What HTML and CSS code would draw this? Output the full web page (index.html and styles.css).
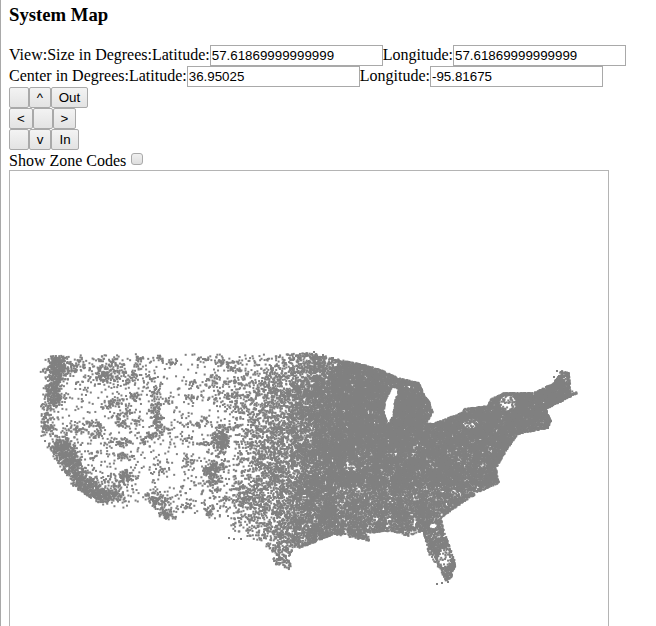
FILE: index.html
```html
<!DOCTYPE html>
<html lang="en">
<head>
  <meta charset="UTF-8">
  <title>System Map</title>
  <link rel="stylesheet" href="styles.css">
</head>
<body>
  <h3 class="page-title">System Map</h3>

  <div class="field-row">View:Size in Degrees:Latitude:<input class="deg-input" type="text" value="57.61869999999999">Longitude:<input class="deg-input" type="text" value="57.61869999999999"></div>
  <div class="field-row">Center in Degrees:Latitude:<input class="deg-input" type="text" value="36.95025">Longitude:<input class="deg-input" type="text" value="-95.81675"></div>

  <div class="nav-row"><button class="nav-btn blank" type="button"></button><button class="nav-btn nav-up" type="button">^</button><button class="nav-btn nav-out" type="button">Out</button></div>
  <div class="nav-row"><button class="nav-btn nav-left" type="button">&lt;</button><button class="nav-btn blank" type="button"></button><button class="nav-btn nav-right" type="button">&gt;</button></div>
  <div class="nav-row"><button class="nav-btn blank" type="button"></button><button class="nav-btn nav-up" type="button">v</button><button class="nav-btn nav-in" type="button">In</button></div>

  <div class="zone-row">Show Zone Codes <input class="zone-check" type="checkbox"></div>

  <div class="map-box">
    <canvas id="map" width="598" height="598"></canvas>
  </div>

  <script src="map.js"></script>
</body>
</html>
```

FILE: styles.css
```css
html {
  overflow: hidden;
}

body {
  margin: 0;
  padding: 4px 8px 0;
  border-left: 1px solid #a9a9a9;
  font-family: "Liberation Serif", serif;
  font-size: 16px;
  color: #000;
  background-color: #fff;
}

.page-title {
  margin: 0 0 19px;
  font-size: 18.72px;
  font-weight: bold;
}

.field-row {
  height: 21px;
  white-space: nowrap;
}

.deg-input {
  box-sizing: border-box;
  width: 173px;
  height: 21px;
  margin: 0;
  padding: 1px;
  border: 1px solid #a9a9a9;
  font-family: "Liberation Sans", sans-serif;
  font-size: 13.333px;
  color: #000;
}

.nav-row {
  display: flex;
  height: 21px;
}

.nav-btn {
  box-sizing: border-box;
  height: 21px;
  margin: 0;
  padding: 1px 0;
  border: 1px solid #a9a9a9;
  border-radius: 2px;
  background: linear-gradient(#f3f3f3, #e3e3e3);
  font-family: "Liberation Sans", sans-serif;
  font-size: 13.333px;
  color: #000;
}

.nav-btn.blank {
  width: 20px;
}

.nav-up {
  width: 22px;
}

.nav-out {
  width: 37px;
}

.nav-left {
  width: 24px;
}

.nav-right {
  width: 23px;
}

.nav-in {
  width: 28px;
}

.zone-row {
  height: 20px;
  line-height: 22px;
}

.zone-check {
  appearance: none;
  box-sizing: border-box;
  width: 12px;
  height: 12px;
  margin: 0 0 1px 1px;
  border: 1px solid #a9a9a9;
  border-radius: 3px;
  background: linear-gradient(#f0f0f0, #dedede);
}

.map-box {
  box-sizing: border-box;
  width: 600px;
  height: 600px;
  border: 1px solid #b4b4b4;
}

#map {
  display: block;
}
```

FILE: map.js
```js
// zip code points, generated from a rough outline of the lower 48
var canvas = document.getElementById('map');
var ctx = canvas.getContext('2d');
var OFFSET_X = 10, OFFSET_Y = 171;

var seed = 20240611;
function rnd() {
  seed = (seed + 0x6D2B79F5) | 0;
  var t = Math.imul(seed ^ (seed >>> 15), 1 | seed);
  t = (t + Math.imul(t ^ (t >>> 7), 61 | t)) ^ t;
  return ((t ^ (t >>> 14)) >>> 0) / 4294967296;
}
function gauss() {
  return (rnd() + rnd() + rnd() + rnd() - 2) * 1.7;
}

var outline = [
  [36,361],[50,354],[62,355],[120,353],[200,353],[270,353],[313,352],[335,358],[363,364],
  [380,369],[397,377],[418,382],[424,396],[428,400],[432,412],[425,422],[432,423],[460,412],
  [463,408],[487,405],[490,398],[503,392],[533,392],[553,382],[560,370],[568,372],[570,390],
  [577,392],[557,402],[545,408],[550,420],[547,427],[517,433],[507,447],[495,467],[498,482],
  [480,490],[460,503],[440,517],[443,530],[455,563],[450,577],[444,580],[440,570],[428,553],
  [422,530],[407,535],[390,530],[367,532],[368,540],[333,533],[300,547],[293,547],[287,557],
  [293,570],[273,563],[270,550],[260,540],[233,536],[213,520],[200,510],[177,520],[160,517],
  [147,500],[127,507],[107,508],[90,497],[73,487],[57,463],[40,437],[40,430],[37,413],[43,390],[40,377]
];
var lake = [[391,386],[384,400],[383,412],[387,423],[392,415],[394,400],[398,388]];

// less dense spots in the east
var gaps = [
  [507,402,9,8,0.12],[470,423,8,5,0.25],[350,465,7,6,0.3],[432,525,4,3,0.03],[443,557,6,10,0.15]
];

// [x, y, spread x, spread y, count]
var clusters = [
  [57,365,5,8,320],[53,390,4,9,240],[107,372,8,6,150],[77,363,8,5,60],[112,403,7,3,60],
  [155,416,3,13,120],[220,438,4,6,200],[212,477,5,10,140],[233,400,6,6,60],[157,500,7,5,100],
  [165,513,5,3,70],[125,475,4,3,50],[100,494,12,4,340],[62,448,6,7,240],[70,462,5,7,220],
  [80,478,6,6,220],[247,493,6,5,70],[207,513,4,3,30],[45,420,4,12,100],[90,490,6,5,90]
];

function inside(poly, x, y) {
  var c = false;
  for (var i = 0, j = poly.length - 1; i < poly.length; j = i++) {
    var a = poly[i], b = poly[j];
    if ((a[1] > y) !== (b[1] > y) && x < (b[0] - a[0]) * (y - a[1]) / (b[1] - a[1]) + a[0]) {
      c = !c;
    }
  }
  return c;
}

function inLand(x, y) {
  return inside(outline, x, y) && !inside(lake, x, y);
}

// patchiness, one random factor per 6px cell
var cells = {};
function patch(x, y) {
  var key = Math.floor(x / 6) + ':' + Math.floor(y / 6);
  if (cells[key] === undefined) cells[key] = 0.5 + rnd() * 0.9;
  return cells[key];
}

function density(x, y) {
  var p;
  if (x < 235) p = 0.018;
  else if (x < 285) p = 0.018 + (x - 235) / 50 * 0.18;
  else if (x < 335) p = 0.2 + (x - 285) / 50 * 0.5;
  else if (y < 445) p = 0.9;
  else if (y < 485) p = 0.65;
  else p = 0.45;
  if (x < 345 && y < 375) p *= 0.6;
  gaps.forEach(function (g) {
    var dx = (x - g[0]) / g[2], dy = (y - g[1]) / g[3];
    if (dx * dx + dy * dy < 1) p *= g[4];
  });
  return p * patch(x, y);
}

function dot(x, y) {
  ctx.fillRect(x - OFFSET_X, y - OFFSET_Y, 2, 2);
}

ctx.fillStyle = '#808080';

for (var i = 0; i < 250000; i++) {
  var x = 35 + rnd() * 545;
  var y = 350 + rnd() * 235;
  if (inLand(x, y) && rnd() < density(x, y)) dot(x, y);
}

clusters.forEach(function (c) {
  for (var n = 0; n < c[4]; n++) {
    var x = c[0] + gauss() * c[2];
    var y = c[1] + gauss() * c[3];
    if (inLand(x, y)) dot(x, y);
  }
});

// small towns in the west
for (var t = 0; t < 90; t++) {
  var tx = 45 + rnd() * 195;
  var ty = 356 + rnd() * 150;
  for (var m = 0; m < 14; m++) {
    var px = tx + gauss() * 3.5, py = ty + gauss() * 2;
    if (inLand(px, py)) dot(px, py);
  }
}

// rows of towns fanning out over the plains
for (var r = 0; r < 26; r++) {
  var y0 = 392 + r * 4.6;
  var slope = (y0 - 450) * -0.05;
  for (var k = 0; k < 20; k++) {
    var sx = 232 + rnd() * 50;
    var sy = y0 + slope * (sx - 290) / 10 + gauss() * 0.7;
    if (inLand(sx, sy)) dot(sx, sy);
  }
}

// scattered points just off the edge
[[313,351],[322,354],[332,357],[345,361],[352,362],[361,364],[553,376],[556,370],[548,385],[540,389],
 [447,581],[441,582],[436,583],[547,427],[233,538],[240,538],[228,537]].forEach(function (p) {
  dot(p[0], p[1]);
});
```
